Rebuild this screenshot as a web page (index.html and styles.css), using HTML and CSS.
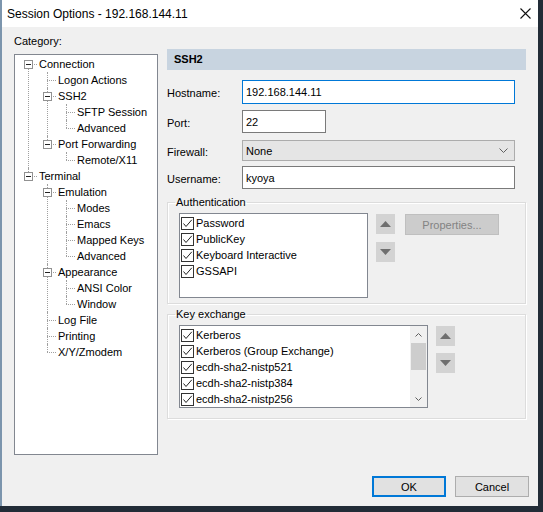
FILE: index.html
```html
<!DOCTYPE html>
<html>
<head>
<meta charset="utf-8">
<title>Session Options</title>
<link rel="stylesheet" href="styles.css">
</head>
<body>
<div class="window">
  <div class="titlebar">
    <span class="title">Session Options - 192.168.144.11</span>
    <svg class="close" width="11" height="11" viewBox="0 0 11 11"><path d="M0.5 0.5L10.5 10.5M10.5 0.5L0.5 10.5" stroke="#111" stroke-width="1.1" fill="none"/></svg>
  </div>
  <div class="main">
    <div class="left">
      <div class="cat-label">Category:</div>
      <div class="tree">
        <ul class="root">
          <li class="first"><div class="row"><span class="box"></span><span class="txt">Connection</span></div>
            <ul>
              <li><div class="row"><span class="txt">Logon Actions</span></div></li>
              <li><div class="row"><span class="box"></span><span class="txt">SSH2</span></div>
                <ul>
                  <li><div class="row"><span class="txt">SFTP Session</span></div></li>
                  <li class="last"><div class="row"><span class="txt">Advanced</span></div></li>
                </ul>
              </li>
              <li class="last"><div class="row"><span class="box"></span><span class="txt">Port Forwarding</span></div>
                <ul>
                  <li class="last"><div class="row"><span class="txt">Remote/X11</span></div></li>
                </ul>
              </li>
            </ul>
          </li>
          <li class="last"><div class="row"><span class="box"></span><span class="txt">Terminal</span></div>
            <ul>
              <li><div class="row"><span class="box"></span><span class="txt">Emulation</span></div>
                <ul>
                  <li><div class="row"><span class="txt">Modes</span></div></li>
                  <li><div class="row"><span class="txt">Emacs</span></div></li>
                  <li><div class="row"><span class="txt">Mapped Keys</span></div></li>
                  <li class="last"><div class="row"><span class="txt">Advanced</span></div></li>
                </ul>
              </li>
              <li><div class="row"><span class="box"></span><span class="txt">Appearance</span></div>
                <ul>
                  <li><div class="row"><span class="txt">ANSI Color</span></div></li>
                  <li class="last"><div class="row"><span class="txt">Window</span></div></li>
                </ul>
              </li>
              <li><div class="row"><span class="txt">Log File</span></div></li>
              <li><div class="row"><span class="txt">Printing</span></div></li>
              <li class="last"><div class="row"><span class="txt">X/Y/Zmodem</span></div></li>
            </ul>
          </li>
        </ul>
      </div>
    </div>

    <div class="right">
      <div class="header">SSH2</div>

      <div class="frow f-host">
        <span class="flabel">Hostname:</span>
        <div class="field focused">192.168.144.11</div>
      </div>
      <div class="frow f-port">
        <span class="flabel">Port:</span>
        <div class="field port">22</div>
      </div>
      <div class="frow f-fw">
        <span class="flabel">Firewall:</span>
        <div class="field select"><span>None</span>
          <svg width="9" height="6" viewBox="0 0 9 6"><path d="M0.5 0.5L4.5 4.5L8.5 0.5" stroke="#606060" stroke-width="1" fill="none"/></svg>
        </div>
      </div>
      <div class="frow f-user">
        <span class="flabel">Username:</span>
        <div class="field">kyoya</div>
      </div>

      <fieldset class="group auth">
        <legend>Authentication</legend>
        <div class="grow">
          <div class="list auth-list">
            <div class="item"><span class="cb"><svg width="11" height="11" viewBox="0 0 11 11"><path d="M1.5 5.5L4 8.5L9.8 1.8" stroke="#222" stroke-width="1" fill="none"/></svg></span><span>Password</span></div>
            <div class="item"><span class="cb"><svg width="11" height="11" viewBox="0 0 11 11"><path d="M1.5 5.5L4 8.5L9.8 1.8" stroke="#222" stroke-width="1" fill="none"/></svg></span><span>PublicKey</span></div>
            <div class="item"><span class="cb"><svg width="11" height="11" viewBox="0 0 11 11"><path d="M1.5 5.5L4 8.5L9.8 1.8" stroke="#222" stroke-width="1" fill="none"/></svg></span><span>Keyboard Interactive</span></div>
            <div class="item"><span class="cb"><svg width="11" height="11" viewBox="0 0 11 11"><path d="M1.5 5.5L4 8.5L9.8 1.8" stroke="#222" stroke-width="1" fill="none"/></svg></span><span>GSSAPI</span></div>
          </div>
          <div class="arrows">
            <div class="abtn"><svg width="11" height="6" viewBox="0 0 11 6"><path d="M0 6L5.5 0L11 6Z" fill="#6f6f6f"/></svg></div>
            <div class="abtn"><svg width="11" height="6" viewBox="0 0 11 6"><path d="M0 0L5.5 6L11 0Z" fill="#6f6f6f"/></svg></div>
          </div>
          <div class="btn disabled">Properties...</div>
        </div>
      </fieldset>

      <fieldset class="group kex">
        <legend>Key exchange</legend>
        <div class="grow">
          <div class="list kex-list">
            <div class="items">
              <div class="item"><span class="cb"><svg width="11" height="11" viewBox="0 0 11 11"><path d="M1.5 5.5L4 8.5L9.8 1.8" stroke="#222" stroke-width="1" fill="none"/></svg></span><span>Kerberos</span></div>
              <div class="item"><span class="cb"><svg width="11" height="11" viewBox="0 0 11 11"><path d="M1.5 5.5L4 8.5L9.8 1.8" stroke="#222" stroke-width="1" fill="none"/></svg></span><span>Kerberos (Group Exchange)</span></div>
              <div class="item"><span class="cb"><svg width="11" height="11" viewBox="0 0 11 11"><path d="M1.5 5.5L4 8.5L9.8 1.8" stroke="#222" stroke-width="1" fill="none"/></svg></span><span>ecdh-sha2-nistp521</span></div>
              <div class="item"><span class="cb"><svg width="11" height="11" viewBox="0 0 11 11"><path d="M1.5 5.5L4 8.5L9.8 1.8" stroke="#222" stroke-width="1" fill="none"/></svg></span><span>ecdh-sha2-nistp384</span></div>
              <div class="item"><span class="cb"><svg width="11" height="11" viewBox="0 0 11 11"><path d="M1.5 5.5L4 8.5L9.8 1.8" stroke="#222" stroke-width="1" fill="none"/></svg></span><span>ecdh-sha2-nistp256</span></div>
            </div>
            <div class="scrollbar">
              <div class="sarrow"><svg width="7" height="4" viewBox="0 0 7 4"><path d="M0.5 3.5L3.5 0.5L6.5 3.5" stroke="#606060" stroke-width="1" fill="none"/></svg></div>
              <div class="thumb"></div>
              <div class="strack"></div>
              <div class="sarrow"><svg width="7" height="4" viewBox="0 0 7 4"><path d="M0.5 0.5L3.5 3.5L6.5 0.5" stroke="#606060" stroke-width="1" fill="none"/></svg></div>
            </div>
          </div>
          <div class="arrows">
            <div class="abtn"><svg width="11" height="6" viewBox="0 0 11 6"><path d="M0 6L5.5 0L11 6Z" fill="#6f6f6f"/></svg></div>
            <div class="abtn"><svg width="11" height="6" viewBox="0 0 11 6"><path d="M0 0L5.5 6L11 0Z" fill="#6f6f6f"/></svg></div>
          </div>
        </div>
      </fieldset>
    </div>
  </div>
  <div class="footer">
    <div class="btn dlg default">OK</div>
    <div class="btn dlg">Cancel</div>
  </div>
</div>
</body>
</html>
```

FILE: styles.css
```css
html, body {
  margin: 0;
  padding: 0;
}
body {
  width: 543px;
  height: 512px;
  overflow: hidden;
  background: #222c37;
  font-family: "Liberation Sans", Arial, sans-serif;
  font-size: 11px;
  color: #000;
}
.window {
  width: 536px;
  height: 506px;
  border-left: 2px solid #7c95ad;
  background: #f0f0f0;
  display: flex;
  flex-direction: column;
}
.titlebar {
  height: 27px;
  flex: none;
  background: #fff;
  display: flex;
  align-items: center;
  justify-content: space-between;
  padding: 0 7px 0 5px;
}
.title {
  font-size: 12px;
  line-height: 16px;
}
.close {
  display: block;
}
.main {
  display: grid;
  grid-template-columns: 144px 359px;
  column-gap: 9px;
  padding-left: 12px;
}
/* left column */
.cat-label {
  margin-top: 7px;
  line-height: 14px;
  height: 14px;
}
.tree {
  margin-top: 6px;
  height: 401px;
  box-sizing: border-box;
  border: 1px solid #828790;
  background: #fff;
}
.tree ul {
  list-style: none;
  margin: 0;
  padding: 0 0 0 8px;
}
.tree ul.root {
  padding: 1px 0 0 13px;
}
.tree li {
  position: relative;
  padding-left: 11px;
}
.tree li::before {
  content: "";
  position: absolute;
  left: 0;
  top: 0;
  bottom: 0;
  border-left: 1px dotted #a0a0a0;
}
.tree li.last::before {
  bottom: auto;
  height: 8px;
}
.tree li.first::before {
  top: 8px;
}
.row {
  position: relative;
  height: 16px;
  line-height: 16px;
  white-space: nowrap;
}
.row::before {
  content: "";
  position: absolute;
  left: -11px;
  top: 8px;
  width: 9px;
  border-top: 1px dotted #a0a0a0;
}
.box {
  position: absolute;
  left: -15px;
  top: 4px;
  width: 9px;
  height: 9px;
  box-sizing: border-box;
  border: 1px solid #919191;
  background: #fff;
  z-index: 1;
}
.box::after {
  content: "";
  position: absolute;
  left: 1px;
  top: 3px;
  width: 5px;
  height: 1px;
  background: #222;
}
/* right column */
.right {
  padding-top: 22px;
}
.header {
  height: 21px;
  line-height: 21px;
  background: #c8d4e0;
  font-weight: bold;
  padding-left: 7px;
}
.frow {
  display: flex;
  align-items: center;
}
.f-host { margin-top: 10px; }
.f-port { margin-top: 6px; }
.f-fw { margin-top: 7px; }
.f-user { margin-top: 5px; }
.flabel {
  width: 75px;
  padding-top: 2px;
}
.field {
  width: 273px;
  height: 23px;
  box-sizing: border-box;
  border: 1px solid #7a7a7a;
  background: #fff;
  padding-left: 3px;
  display: flex;
  align-items: center;
}
.field.focused {
  height: 24px;
  border-color: #0078d7;
}
.field.port {
  width: 84px;
}
.field.select {
  height: 21px;
  background: #e5e5e5;
  border-color: #acacac;
  justify-content: space-between;
  padding-right: 6px;
}
.group {
  margin: 6px 0 0 0;
  padding: 4px 0 5px 11px;
  border: 1px solid #dcdcdc;
  box-shadow: inset 1px 1px 0 #fff, 1px 1px 0 #fff;
  min-width: 0;
}
.group legend {
  padding: 0 1px;
  margin-left: -4px;
  line-height: 14px;
}
.group.kex {
  margin-top: 3px;
  padding-top: 4px;
  padding-bottom: 10px;
}
.grow {
  display: flex;
  align-items: flex-start;
}
.list {
  box-sizing: border-box;
  border: 1px solid #828790;
  background: #fff;
  padding-top: 1px;
}
.auth-list {
  width: 189px;
  height: 85px;
}
.kex-list {
  width: 249px;
  height: 83px;
  display: flex;
  justify-content: space-between;
  padding-top: 0;
}
.items {
  padding-top: 1px;
}
.item {
  height: 16px;
  display: flex;
  align-items: center;
  white-space: nowrap;
}
.cb {
  width: 13px;
  height: 13px;
  box-sizing: border-box;
  border: 1px solid #333;
  background: #fff;
  margin-left: 1px;
  margin-right: 2px;
  display: flex;
}
.cb svg {
  display: block;
}
.scrollbar {
  width: 17px;
  height: 81px;
  background: #f0f0f0;
  display: flex;
  flex-direction: column;
}
.sarrow {
  height: 17px;
  display: flex;
  align-items: center;
  justify-content: center;
}
.thumb {
  height: 27px;
  margin: 0 1px;
  background: #cdcdcd;
}
.strack {
  flex: 1;
}
.arrows {
  margin: 1px 0 0 8px;
  display: flex;
  flex-direction: column;
  gap: 8px;
}
.kex .arrows {
  gap: 7px;
}
.abtn {
  width: 19px;
  height: 20px;
  background: #d3d3d3;
  display: flex;
  align-items: center;
  justify-content: center;
}
.btn {
  box-sizing: border-box;
  border: 1px solid #adadad;
  background: #e1e1e1;
  display: flex;
  align-items: center;
  justify-content: center;
}
.btn.disabled {
  margin: 1px 0 0 10px;
  width: 94px;
  height: 21px;
  background: #cccccc;
  border-color: #bfbfbf;
  color: #838383;
}
.footer {
  margin-top: auto;
  display: flex;
  justify-content: flex-end;
  gap: 9px;
  padding: 0 9px 9px 0;
}
.btn.dlg {
  width: 74px;
  height: 21px;
}
.btn.default {
  border: 2px solid #0078d7;
}
```
